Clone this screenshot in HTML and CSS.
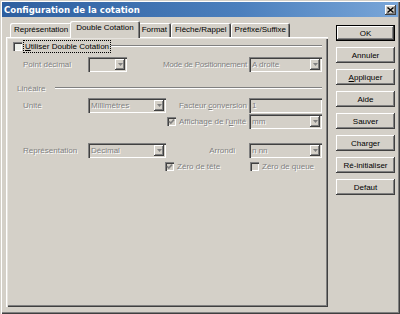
FILE: index.html
```html
<!DOCTYPE html>
<html lang="fr">
<head>
  <meta charset="UTF-8">
  <title>Configuration de la cotation</title>
  <link rel="stylesheet" href="styles.css">
</head>
<body>
  <div class="window">
    <div class="titlebar">
      <span class="title">Configuration de la cotation</span>
      <span class="close"><svg viewBox="0 0 7 6" width="7" height="6"><path d="M0.5 0.5 L6.5 5.5 M6.5 0.5 L0.5 5.5" stroke="#000" stroke-width="1.4"/></svg></span>
    </div>
    <div class="client">
      <div class="tabs-area">
        <div class="tabrow">
          <span class="tab">Représentation</span>
          <span class="tab active">Double Cotation</span>
          <span class="tab">Format</span>
          <span class="tab">Flèche/Rappel</span>
          <span class="tab">Préfixe/Suffixe</span>
        </div>
        <div class="panel">
          <div class="grouphead">
            <span class="chk enabled"></span>
            <span class="focus"><u>U</u>tiliser Double Cotation</span>
            <span class="etch"></span>
          </div>

          <div class="row row-a">
            <span class="lbl1">Point décimal</span>
            <span class="cell2"><span class="combo narrow"><span class="val"></span><span class="drop"><svg viewBox="0 0 5 3" width="5" height="3"><path d="M0 0 H5 L2.5 3 Z" fill="#808080"/></svg></span></span></span>
            <span class="lbl2 tight"><span>Mode de Positionnement</span></span>
            <span class="cell4"><span class="combo"><span class="val">A droite</span><span class="drop"><svg viewBox="0 0 5 3" width="5" height="3"><path d="M0 0 H5 L2.5 3 Z" fill="#808080"/></svg></span></span></span>
          </div>

          <div class="row row-lin">
            <span class="section">Linéaire</span>
            <span class="etch"></span>
          </div>

          <div class="row row-c">
            <span class="lbl1">Unité</span>
            <span class="cell2"><span class="combo"><span class="val">Millimètres</span><span class="drop"><svg viewBox="0 0 5 3" width="5" height="3"><path d="M0 0 H5 L2.5 3 Z" fill="#808080"/></svg></span></span></span>
            <span class="lbl2"><span>Facteur <u>c</u>onversion</span></span>
            <span class="cell4"><span class="combo"><span class="val">1</span></span></span>
          </div>

          <div class="row row-d">
            <span class="lbl1"></span>
            <span class="cell2"></span>
            <span class="lbl2 chkcell"><span class="chk"><svg viewBox="0 0 7 7" width="7" height="7"><path d="M1 3.2 L2.8 5 L6 1.6" fill="none" stroke="#808080" stroke-width="1.6"/></svg></span><span class="chktext">Affichage de l'<u>u</u>nité</span></span>
            <span class="cell4"><span class="combo"><span class="val">mm</span><span class="drop"><svg viewBox="0 0 5 3" width="5" height="3"><path d="M0 0 H5 L2.5 3 Z" fill="#808080"/></svg></span></span></span>
          </div>

          <div class="row row-e">
            <span class="lbl1">Représentation</span>
            <span class="cell2"><span class="combo"><span class="val">Décimal</span><span class="drop"><svg viewBox="0 0 5 3" width="5" height="3"><path d="M0 0 H5 L2.5 3 Z" fill="#808080"/></svg></span></span></span>
            <span class="lbl2 short"><span>Arrondi</span></span>
            <span class="cell4"><span class="combo"><span class="val">n nn</span><span class="drop"><svg viewBox="0 0 5 3" width="5" height="3"><path d="M0 0 H5 L2.5 3 Z" fill="#808080"/></svg></span></span></span>
          </div>

          <div class="row row-f">
            <span class="lbl1"></span>
            <span class="cell2"></span>
            <span class="lbl2 chkcell"><span class="chk"><svg viewBox="0 0 7 7" width="7" height="7"><path d="M1 3.2 L2.8 5 L6 1.6" fill="none" stroke="#808080" stroke-width="1.6"/></svg></span><span class="chktext">Zéro de tête</span></span>
            <span class="cell4 chkcell pad"><span class="chk"></span><span class="chktext">Zéro de queue</span></span>
          </div>
        </div>
      </div>

      <div class="buttons">
        <span class="btn default">OK</span>
        <span class="btn">Annuler</span>
        <span class="btn"><span><u>A</u>ppliquer</span></span>
        <span class="btn">Aide</span>
        <span class="btn">Sauver</span>
        <span class="btn">Charger</span>
        <span class="btn">Ré-initialiser</span>
        <span class="btn">Defaut</span>
      </div>
    </div>
  </div>
</body>
</html>
```

FILE: styles.css
```css
body {
  margin: 0;
  width: 400px;
  height: 314px;
  background: #d4d0c8;
  font-family: "Liberation Sans", Arial, sans-serif;
  font-size: 8px;
  color: #000;
}
.window {
  width: 400px;
  height: 314px;
  box-sizing: border-box;
  padding: 2px;
  display: flex;
  flex-direction: column;
  box-shadow: inset 1px 1px 0 #d4d0c8, inset 2px 2px 0 #fff, inset -1px -1px 0 #404040, inset -2px -2px 0 #808080;
}
.titlebar {
  height: 15px;
  flex: none;
  display: flex;
  align-items: center;
  justify-content: space-between;
  padding: 0 2px;
  background: linear-gradient(90deg, #2e5f9f 0%, #4b7fbd 60%, #79a6d8 100%);
}
.title {
  color: #fff;
  font-family: "DejaVu Sans", Verdana, sans-serif;
  font-weight: bold;
  font-size: 8.6px;
}
.close {
  width: 11px;
  height: 10px;
  box-sizing: border-box;
  background: #d4d0c8;
  display: flex;
  align-items: center;
  justify-content: center;
  box-shadow: inset -1px -1px 0 #404040, inset 1px 1px 0 #fff, inset -2px -2px 0 #808080;
}
.client {
  flex: 1;
  display: flex;
  padding: 4px 0 0 4px;
}
.tabs-area {
  width: 322px;
  height: 286px;
  display: flex;
  flex-direction: column;
}
.tabrow {
  height: 16px;
  flex: none;
  display: flex;
  align-items: flex-end;
  padding-left: 4px;
}
.tab {
  height: 14px;
  box-sizing: border-box;
  padding: 1px 4px 0 4px;
  line-height: 12px;
  white-space: nowrap;
  border-radius: 2px 2px 0 0;
  box-shadow: inset 1px 1px 0 #fff, inset -1px 0 0 #404040, inset -2px 0 0 #808080;
}
.tab.active {
  height: 17px;
  margin: 0 -2px -1px -2px;
  padding: 0 6px 0 6px;
  line-height: 14px;
  background: #d4d0c8;
  position: relative;
  z-index: 1;
}
.panel {
  flex: 1;
  box-sizing: border-box;
  padding: 2px 6px 0 2px;
  box-shadow: inset 1px 1px 0 #fff, inset 2px 2px 0 #e6e3de, inset -1px -1px 0 #404040, inset -2px -2px 0 #808080;
}
.etch {
  flex: 1;
  height: 0;
  border-top: 1px solid #808080;
  border-bottom: 1px solid #fff;
}
.grouphead {
  display: flex;
  align-items: center;
  height: 12px;
  margin-top: 1px;
  padding-left: 5px;
}
.grouphead .etch {
  margin-left: 1px;
}
.focus {
  margin-left: 2px;
  padding: 0 1px;
  height: 11px;
  line-height: 11px;
  outline: 1px dotted #000;
  outline-offset: 0;
  white-space: nowrap;
}
.chk {
  width: 9px;
  height: 9px;
  flex: none;
  box-sizing: border-box;
  background: #d4d0c8;
  display: flex;
  align-items: center;
  justify-content: center;
  box-shadow: inset 1px 1px 0 #808080, inset 2px 2px 0 #404040, inset -1px -1px 0 #fff;
}
.chk.enabled {
  background: #eef0ea;
}
.row {
  display: flex;
  height: 15px;
  align-items: center;
  color: #808080;
  text-shadow: 1px 1px 0 #fff;
  white-space: nowrap;
}
.row-a { margin-top: 5px; }
.row-lin { margin-top: 10px; height: 12px; }
.row-c { margin-top: 4px; }
.row-d { margin-top: 1px; }
.row-e { margin-top: 14px; }
.row-f { margin-top: 3px; height: 11px; }
.section {
  padding-left: 9px;
  margin-right: 10px;
}
.lbl1 {
  width: 80px;
  box-sizing: border-box;
  padding-left: 15px;
}
.cell2 {
  width: 78px;
  height: 100%;
  display: flex;
}
.lbl2 {
  width: 83px;
  box-sizing: border-box;
  display: flex;
  justify-content: flex-end;
  padding-right: 2px;
}
.lbl2.tight {
  letter-spacing: -0.2px;
}
.lbl2.short {
  padding-right: 14px;
}
.cell4 {
  width: 73px;
  height: 100%;
  display: flex;
}
.chkcell {
  display: flex;
  align-items: center;
  justify-content: flex-start;
  padding-left: 1px;
}
.chkcell.pad {
  padding-left: 4px;
}
.chktext {
  margin-left: 3px;
}
.combo {
  flex: 1;
  display: flex;
  align-items: center;
  box-sizing: border-box;
  height: 15px;
  padding: 2px 2px 2px 3px;
  background: #d4d0c8;
  box-shadow: inset 1px 1px 0 #808080, inset 2px 2px 0 #404040, inset -1px -1px 0 #fff;
}
.combo.narrow {
  flex: none;
  width: 39px;
}
.val {
  flex: 1;
}
.drop {
  width: 10px;
  height: 11px;
  box-sizing: border-box;
  display: flex;
  align-items: center;
  justify-content: center;
  box-shadow: inset -1px -1px 0 #404040, inset 1px 1px 0 #fff, inset -2px -2px 0 #808080;
}
.buttons {
  display: flex;
  flex-direction: column;
  margin: 4px 0 0 8px;
}
.btn {
  width: 59px;
  height: 16px;
  box-sizing: border-box;
  margin-bottom: 6px;
  display: flex;
  align-items: center;
  justify-content: center;
  box-shadow: inset -1px -1px 0 #404040, inset 1px 1px 0 #fff, inset -2px -2px 0 #808080;
}
.btn.default {
  box-shadow: inset 0 0 0 1px #000, inset -2px -2px 0 #404040, inset 2px 2px 0 #fff, inset -3px -3px 0 #808080;
}
```
